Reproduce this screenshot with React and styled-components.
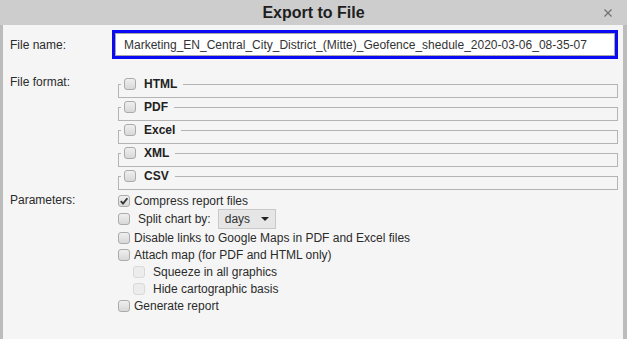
import React from "react";
import styled, { createGlobalStyle } from "styled-components";

const GlobalStyle = createGlobalStyle`
  html, body {
    margin: 0;
    padding: 0;
    background: #f5f5f5;
  }
  body {
    font-family: "Liberation Sans", Arial, sans-serif;
    font-size: 12px;
    color: #2b2b2b;
  }
`;

const Dialog = styled.div`
  width: 627px;
  height: 339px;
  display: flex;
  flex-direction: column;
  overflow: hidden;
`;

const TitleBar = styled.div`
  height: 25px;
  flex: none;
  background: #cdcdcd;
  display: grid;
  grid-template-columns: 1fr auto 1fr;
  align-items: center;
`;

const Title = styled.div`
  grid-column: 2;
  font-size: 16px;
  font-weight: bold;
  color: #1e1e1e;
`;

const CloseButton = styled.button`
  justify-self: end;
  margin-right: 14px;
  width: 10px;
  height: 10px;
  padding: 0;
  border: 0;
  background: none;
  display: flex;
  align-items: center;
  justify-content: center;
  cursor: pointer;
`;

const Body = styled.div`
  flex: 1;
  background: #f5f5f5;
  border-left: 3px solid #bcbcbc;
  border-right: 4px solid #bcbcbc;
  padding: 8px 0 0 7px;
`;

const FormRow = styled.div`
  display: grid;
  grid-template-columns: 105px 500px;
  align-items: ${(p) => (p.$top ? "start" : "center")};
  margin-top: ${(p) => p.$gap || 0}px;
`;

const RowLabel = styled.div`
  line-height: ${(p) => p.$lh || 14}px;
  margin-top: ${(p) => p.$shift || 0}px;
  color: #2b2b2b;
`;

const FileInput = styled.input`
  box-sizing: border-box;
  width: 500px;
  height: 23px;
  margin: 0;
  padding: 0 8px;
  border: 1px solid #a6a6a6;
  outline: 3px solid #0a0af5;
  background: #fff;
  font-family: "Liberation Sans", Arial, sans-serif;
  font-size: 12px;
  color: #333;
`;

const GroupList = styled.div`
  display: grid;
  gap: 2px;
  margin-left: 3px;
`;

const FormatGroup = styled.fieldset`
  box-sizing: border-box;
  width: 500px;
  min-width: 0;
  margin: 0;
  padding: 0 0 6px;
  border: 1px solid #b4b4b4;
`;

const Legend = styled.legend`
  margin-left: 2px;
  padding: 0 6px 0 3px;
  height: 14px;
`;

const LegendLabel = styled.label`
  display: inline-flex;
  align-items: center;
  height: 14px;
  font-weight: bold;
  color: #222;
  gap: 8px;
`;

const Box = styled.span`
  box-sizing: border-box;
  flex: none;
  width: 12px;
  height: 12px;
  border-radius: 3px;
  border: 1px solid ${(p) => (p.$disabled ? "#d9d9d9" : "#ababab")};
  background: ${(p) =>
    p.$disabled ? "#ececec" : "linear-gradient(#efefef, #d8d8d8)"};
  display: flex;
  align-items: center;
  justify-content: center;
`;

const ParamList = styled.div`
  display: flex;
  flex-direction: column;
  margin-left: 3px;
`;

const ParamRow = styled.label`
  display: flex;
  align-items: center;
  flex: none;
  height: ${(p) => p.$h || 17}px;
  padding-left: ${(p) => p.$indent || 0}px;
  gap: ${(p) => p.$gap || 4}px;
  white-space: nowrap;
`;

const Select = styled.div`
  box-sizing: border-box;
  width: 58px;
  height: 20px;
  margin-left: -1px;
  padding: 0 6px;
  background: #e6e6e6;
  border: 1px solid #c9c9c9;
  display: flex;
  align-items: center;
  justify-content: space-between;
  color: #333;
`;

const Checkbox = ({ checked, disabled }) => (
  <Box $disabled={disabled}>
    {checked && (
      <svg width="10" height="10" viewBox="0 0 10 10">
        <path d="M1.8 5.2 L4 7.6 L8.4 2.2" fill="none" stroke="#333" strokeWidth="1.8" />
      </svg>
    )}
  </Box>
);

const formats = ["HTML", "PDF", "Excel", "XML", "CSV"];

export default function App() {
  return (
    <>
      <GlobalStyle />
      <Dialog>
        <TitleBar>
          <Title>Export to File</Title>
          <CloseButton aria-label="close">
            <svg width="8" height="8" viewBox="0 0 8 8">
              <path d="M0.5 0.5 L7.5 7.5 M7.5 0.5 L0.5 7.5" stroke="#6e6e6e" strokeWidth="1.1" />
            </svg>
          </CloseButton>
        </TitleBar>
        <Body>
          <FormRow>
            <RowLabel>File name:</RowLabel>
            <FileInput
              defaultValue="Marketing_EN_Central_City_District_(Mitte)_Geofence_shedule_2020-03-06_08-35-07"
            />
          </FormRow>

          <FormRow $top $gap={21}>
            <RowLabel $shift={-2}>File format:</RowLabel>
            <GroupList>
              {formats.map((f) => (
                <FormatGroup key={f}>
                  <Legend>
                    <LegendLabel>
                      <Checkbox />
                      {f}
                    </LegendLabel>
                  </Legend>
                </FormatGroup>
              ))}
            </GroupList>
          </FormRow>

          <FormRow $top $gap={2}>
            <RowLabel $lh={17}>Parameters:</RowLabel>
            <ParamList>
              <ParamRow>
                <Checkbox checked />
                Compress report files
              </ParamRow>
              <ParamRow $h={20} $gap={8}>
                <Checkbox />
                Split chart by:
                <Select>
                  days
                  <svg width="8" height="4" viewBox="0 0 8 4">
                    <path d="M0 0 L8 0 L4 4 Z" fill="#222" />
                  </svg>
                </Select>
              </ParamRow>
              <ParamRow>
                <Checkbox />
                Disable links to Google Maps in PDF and Excel files
              </ParamRow>
              <ParamRow>
                <Checkbox />
                Attach map (for PDF and HTML only)
              </ParamRow>
              <ParamRow $indent={15} $gap={8}>
                <Checkbox disabled />
                Squeeze in all graphics
              </ParamRow>
              <ParamRow $indent={15} $gap={8}>
                <Checkbox disabled />
                Hide cartographic basis
              </ParamRow>
              <ParamRow>
                <Checkbox />
                Generate report
              </ParamRow>
            </ParamList>
          </FormRow>
        </Body>
      </Dialog>
    </>
  );
}
